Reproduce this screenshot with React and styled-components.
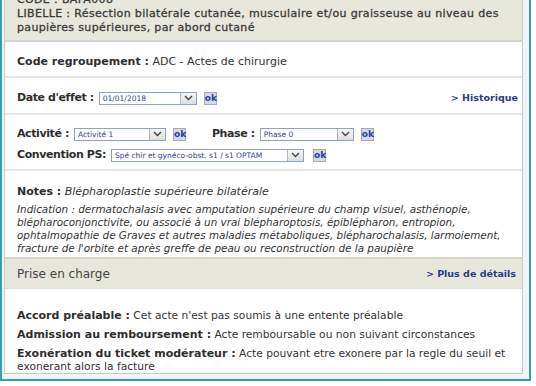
import React from "react";
import { styled, createGlobalStyle } from "styled-components";

const Global = createGlobalStyle`
  html, body {
    margin: 0;
    padding: 0;
    background: #ffffff;
    overflow: hidden;
  }
  body {
    font-family: "DejaVu Sans", Verdana, sans-serif;
    color: #333;
  }
`;

function Select({ value, width }) {
    return (
        <SelectBox width={width}>
            <SelectText>{value}</SelectText>
            <Arrow>
                <svg width="9" height="6" viewBox="0 0 9 6">
                    <path d="M1 1 L4.5 4.5 L8 1" fill="none" stroke="#444" strokeWidth="1.4" />
                </svg>
            </Arrow>
        </SelectBox>
    );
}

function App() {
    return (
        <>
            <Global />
            <Frame>
                <Panel>
                    <Header>
                        <div>CODE : BAFA008</div>
                        <div>
                            LIBELLE : Résection bilatérale cutanée, musculaire et/ou graisseuse au niveau des
                            paupières supérieures, par abord cutané
                        </div>
                    </Header>

                    <Row pad="13px 12px 7px">
                        <Bold>Code regroupement :</Bold> ADC - Actes de chirurgie
                    </Row>

                    <Row pad="13px 4px 8px 12px">
                        <Line>
                            <Field>
                                <Label>Date d'effet :</Label>
                                <Select value="01/01/2018" width={98} />
                                <Ok>ok</Ok>
                            </Field>
                            <Link>&gt; Historique</Link>
                        </Line>
                    </Row>

                    <Row pad="12px 12px 7px">
                        <Field>
                            <Label>Activité :</Label>
                            <Select value="Activité 1" width={92} />
                            <Ok>ok</Ok>
                            <Spacer w={14} />
                            <Label>Phase :</Label>
                            <Select value="Phase 0" width={94} />
                            <Ok>ok</Ok>
                        </Field>
                        <Field top={7}>
                            <Label>Convention PS:</Label>
                            <Select value="Spé chir et gynéco-obst. s1 / s1 OPTAM" width={193} />
                            <Ok shift={2}>ok</Ok>
                        </Field>
                    </Row>

                    <Row pad="14px 8px 2px 12px" last>
                        <div>
                            <Bold>Notes :</Bold> <Italic>Blépharoplastie supérieure bilatérale</Italic>
                        </div>
                        <Indication>
                            Indication : dermatochalasis avec amputation supérieure du champ visuel, asthénopie,
                            <br />
                            blépharoconjonctivite, ou associé à un vrai blépharoptosis, épiblépharon, entropion,
                            <br />
                            ophtalmopathie de Graves et autres maladies métaboliques, blépharochalasis, larmoiement,
                            <br />
                            fracture de l'orbite et après greffe de peau ou reconstruction de la paupière
                        </Indication>
                    </Row>

                    <SectionHead>
                        <SectionTitle>Prise en charge</SectionTitle>
                        <Link>&gt; Plus de détails</Link>
                    </SectionHead>

                    <Body>
                        <Para>
                            <Bold>Accord préalable :</Bold> Cet acte n'est pas soumis à une entente préalable
                        </Para>
                        <Para>
                            <Bold>Admission au remboursement :</Bold> Acte remboursable ou non suivant circonstances
                        </Para>
                        <Para>
                            <Bold>Exonération du ticket modérateur :</Bold> Acte pouvant etre exonere par la regle du
                            seuil et exonerant alors la facture
                        </Para>
                    </Body>
                </Panel>
            </Frame>
        </>
    );
}

export default App;

const Frame = styled.div`
    width: 531px;
    box-sizing: border-box;
    margin-top: -14px;
    border: 2px solid #3a9cb2;
    background: #eef6f9;
    padding: 0 6px 5px 2px;
`;
const Panel = styled.div`
    border: 1px solid #c9c9c4;
    border-top: none;
    background: #fff;
`;
const Header = styled.div`
    background: #e8e7dc;
    padding: 5px 10px 5px 12px;
    font-size: 11px;
    line-height: 14px;
    letter-spacing: 0.35px;
    color: #3a3a3a;
    -webkit-text-stroke: 0.3px #3a3a3a;
    border-bottom: 2px solid #d6d5cc;
`;
const Row = styled.div`
    padding: ${(p) => p.pad};
    font-size: 11px;
    line-height: 14px;
    color: #333;
    border-bottom: ${(p) => (p.last ? "2px solid #d6d5cc" : "2px solid #e6e6e6")};
`;
const Bold = styled.span`
    font-weight: bold;
    color: #2e2e2e;
`;
const Label = styled(Bold)`
    letter-spacing: -0.4px;
    margin-right: -1px;
`;
const Italic = styled.span`
    font-style: italic;
`;
const Line = styled.div`
    display: flex;
    justify-content: space-between;
    align-items: center;
`;
const Field = styled.div`
    display: flex;
    align-items: center;
    gap: 6px;
    margin-top: ${(p) => p.top || 0}px;
`;
const Spacer = styled.span`
    width: ${(p) => p.w}px;
`;
const SelectBox = styled.div`
    width: ${(p) => p.width}px;
    height: 13px;
    box-sizing: border-box;
    border: 1px solid #8ea3c2;
    background: #fff;
    display: flex;
    align-items: stretch;
    margin-right: 1px;
`;
const SelectText = styled.span`
    flex: 1;
    overflow: hidden;
    white-space: nowrap;
    font-size: 7.5px;
    line-height: 11px;
    padding-left: 3px;
    color: #2c3f9c;
`;
const Arrow = styled.span`
    width: 15px;
    border-left: 1px solid #aab6c8;
    background: linear-gradient(#f6f6f6, #dedede);
    display: flex;
    align-items: center;
    justify-content: center;
`;
const Ok = styled.span`
    width: 13px;
    height: 13px;
    box-sizing: border-box;
    margin-left: ${(p) => p.shift || 0}px;
    border: 1px solid #a4aabb;
    background: #d7d9e2;
    color: #2b3fa8;
    font-size: 9px;
    font-weight: bold;
    line-height: 11px;
    text-align: center;
`;
const Link = styled.span`
    color: #2b3a8c;
    font-size: 9.5px;
    font-weight: bold;
`;
const Indication = styled.div`
    margin-top: 4px;
    font-style: italic;
    font-size: 10.4px;
    line-height: 13px;
    white-space: nowrap;
`;
const SectionHead = styled.div`
    background: #e8e7dc;
    display: flex;
    justify-content: space-between;
    align-items: center;
    height: 30px;
    box-sizing: border-box;
    padding: 0 6px 0 12px;
    border-bottom: 1px solid #e2e1d8;
`;
const SectionTitle = styled.span`
    font-size: 12px;
    color: #444;
`;
const Body = styled.div`
    padding: 20px 6px 0 12px;
    font-size: 10.7px;
    line-height: 13px;
`;
const Para = styled.div`
    margin-bottom: 6px;
    &:last-child {
        margin-bottom: 0;
    }
    ${Bold} {
        font-size: 11px;
    }
`;
